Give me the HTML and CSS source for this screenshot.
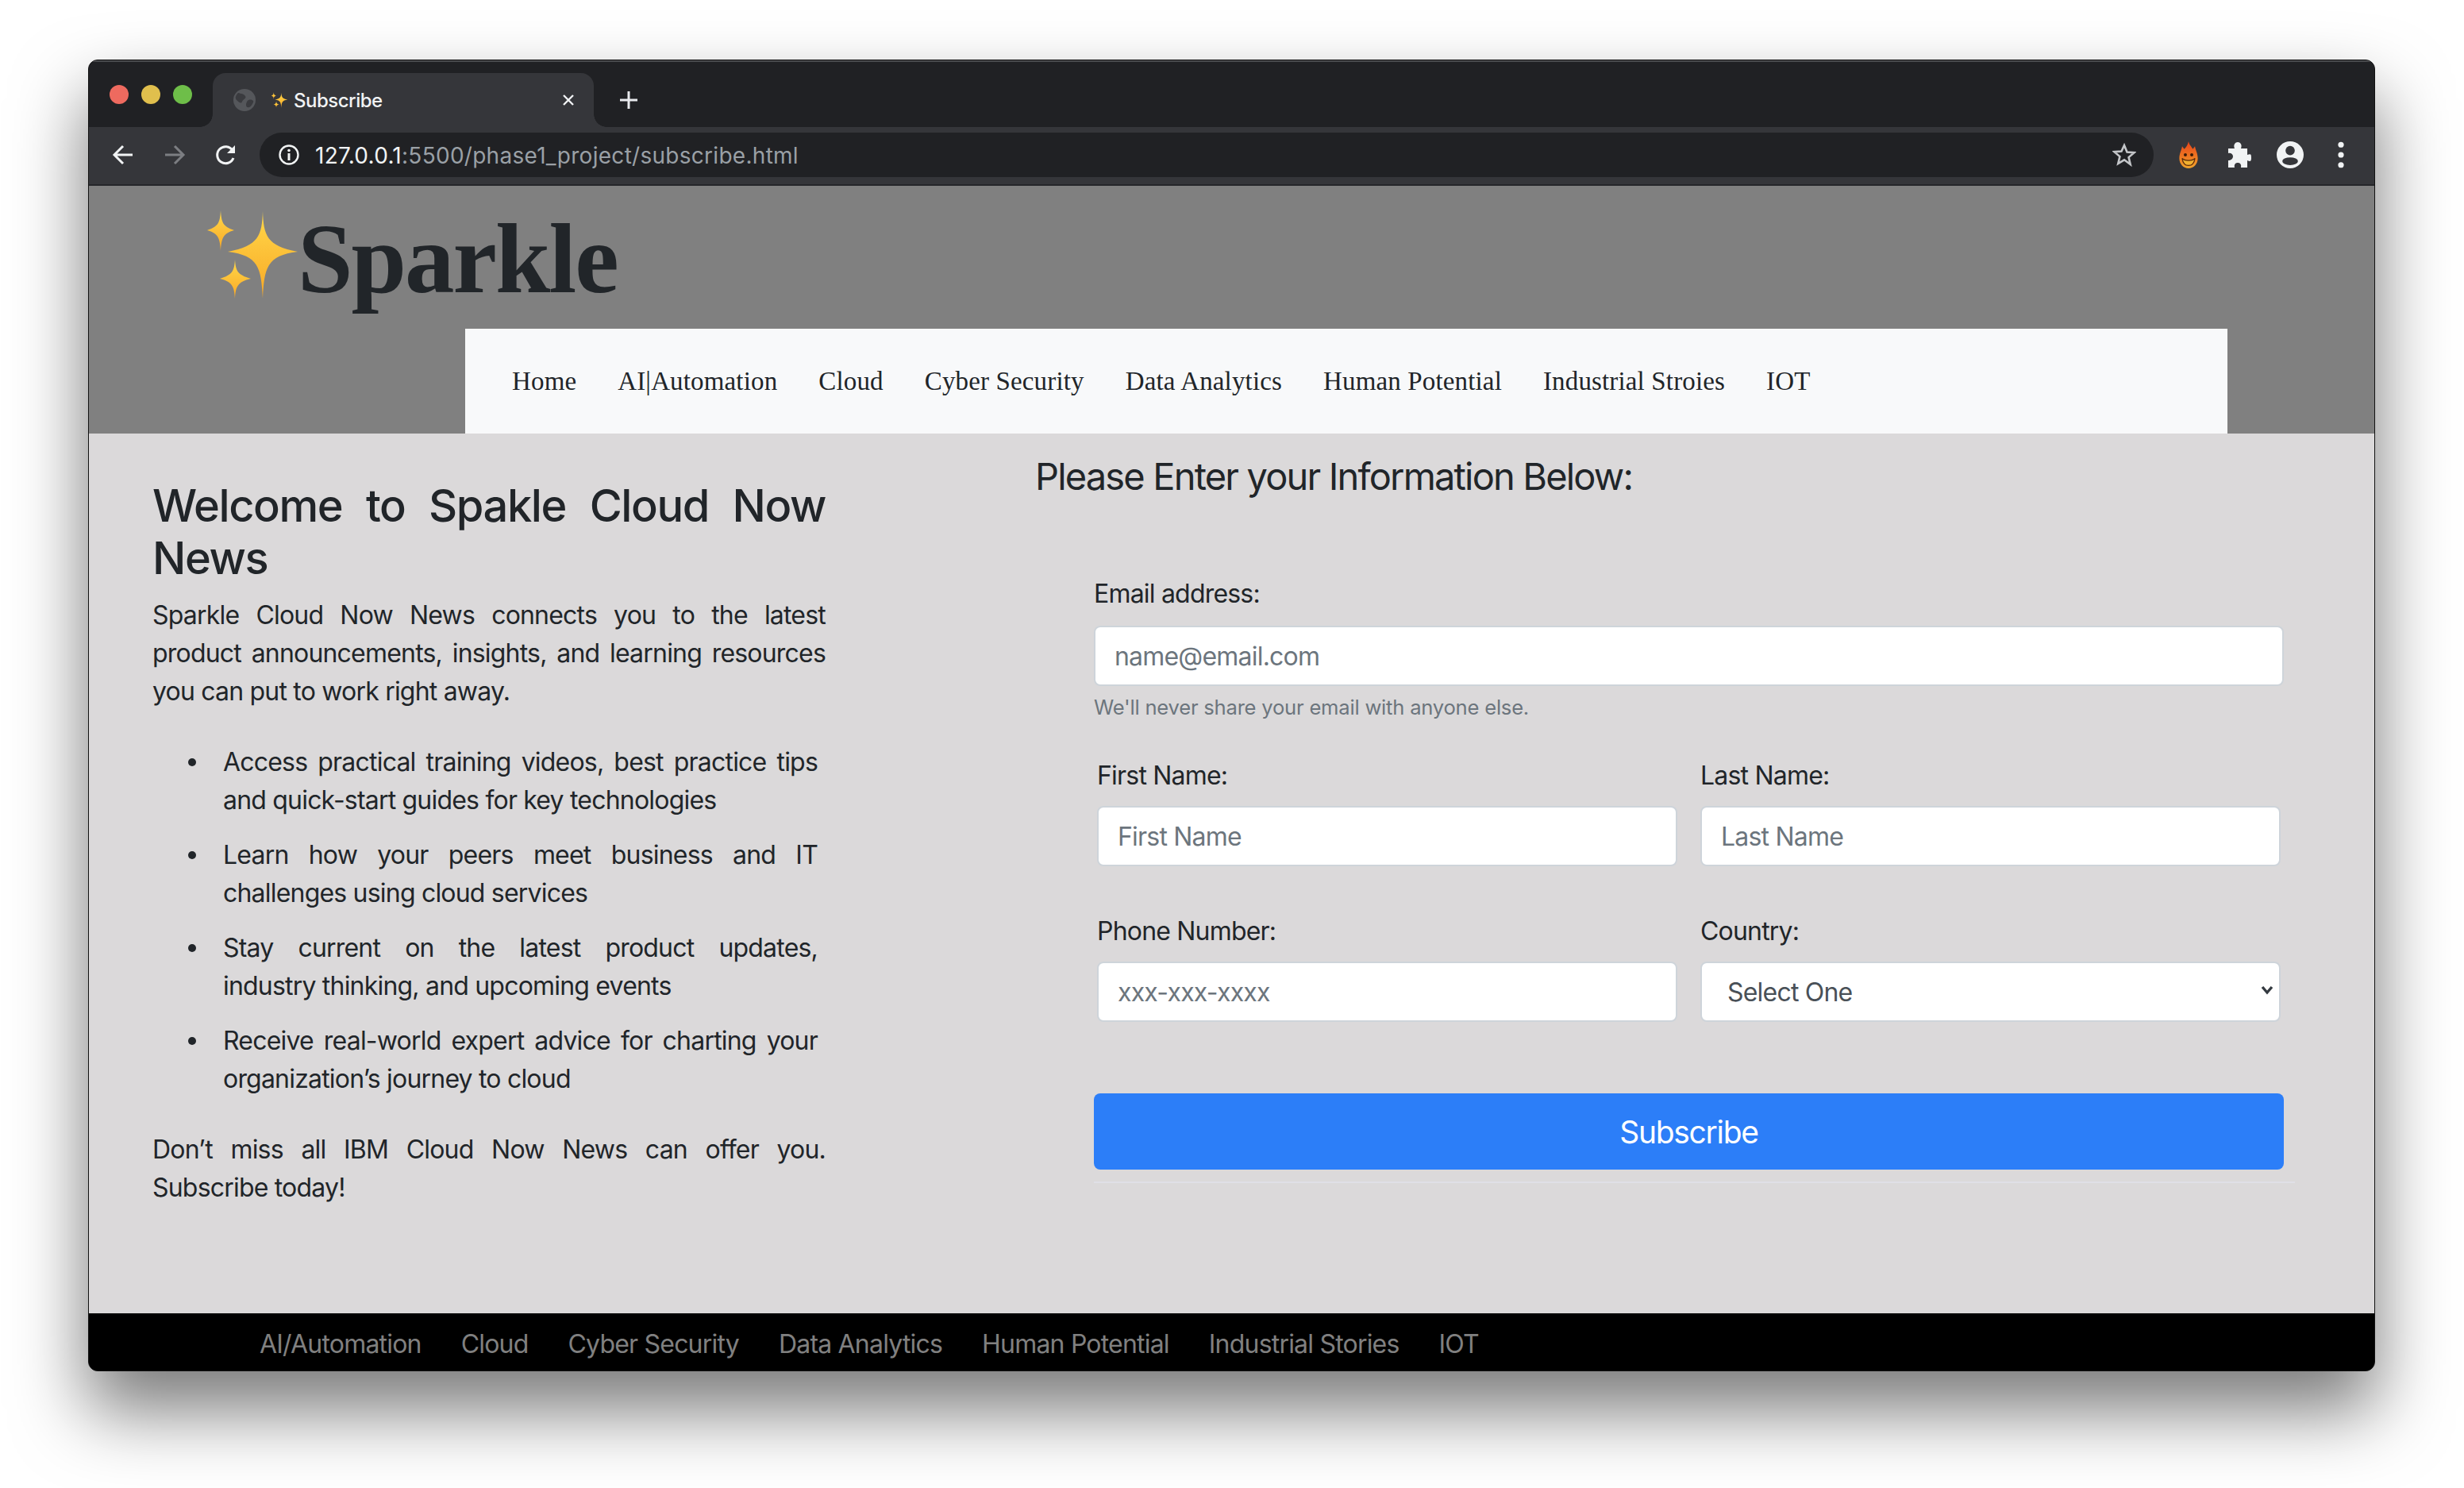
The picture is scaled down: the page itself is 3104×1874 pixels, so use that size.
FILE: index.html
```html
<!DOCTYPE html>
<html lang="en">
<head>
    <meta charset="UTF-8">
    <title>Subscribe</title>
    <link rel="stylesheet" href="styles.css">
</head>
<body>
    <div class="window">
        <div class="titlebar">
            <div class="lights">
                <span class="light light-red"></span>
                <span class="light light-yellow"></span>
                <span class="light light-green"></span>
            </div>
            <div class="tab">
                <svg class="tab-globe" viewBox="0 0 28 28"><circle cx="14" cy="14" r="14" fill="#55575b"/><path d="M6 5c4 1 7 1 9 4s-3 4-4 7-4 1-7-2 0-7 2-9zM19 14c3-1 5 0 6 1s-2 7-5 8-4-1-4-3 1-5 3-6z" fill="#3a3b3f"/></svg>
                <svg class="tab-spark" viewBox="0 0 122 116"><use href="#sparkles"/></svg>
                <span class="tab-title">Subscribe</span>
                <svg class="tab-close" viewBox="0 0 16 16"><path d="M2 2l12 12M14 2L2 14" stroke="#f1f3f4" stroke-width="2.4" fill="none"/></svg>
            </div>
            <svg class="new-tab" viewBox="0 0 24 24"><path d="M12 1v22M1 12h22" stroke="#e8eaed" stroke-width="3" fill="none"/></svg>
        </div>
        <div class="toolbar">
            <svg class="tool-icon" viewBox="0 0 28 28"><path d="M26 14H4M14 3L3 14l11 11" stroke="#f1f3f4" stroke-width="3" fill="none"/></svg>
            <svg class="tool-icon" viewBox="0 0 28 28"><path d="M2 14h22M14 3l11 11-11 11" stroke="#7c7e82" stroke-width="3" fill="none"/></svg>
            <svg class="tool-icon" viewBox="0 0 28 28"><path d="M23 18a10.500 10.500 0 1 1-1-9.500" stroke="#f1f3f4" stroke-width="3" fill="none"/><path d="M25 2v10H15z" fill="#f1f3f4"/></svg>
            <div class="omnibox">
                <svg class="info-icon" viewBox="0 0 26 26"><circle cx="13" cy="13" r="11.500" stroke="#f1f3f4" stroke-width="2.400" fill="none"/><path d="M13 11v9" stroke="#f1f3f4" stroke-width="3"/><circle cx="13" cy="7.500" r="1.800" fill="#f1f3f4"/></svg>
                <span class="url"><span class="url-host">127.0.0.1</span>:5500/phase1_project/subscribe.html</span>
                <svg class="star-icon" viewBox="0 0 30 30"><path d="M15 3l3.500 8.500 9 .7-6.900 5.900 2.100 8.900L15 21.300l-7.700 4.700 2.100-8.900-6.900-5.900 9-.7z" stroke="#c4c6c9" stroke-width="2.600" fill="none"/></svg>
            </div>
            <div class="extensions">
                <svg class="ext-icon" viewBox="0 0 28 38">
                    <defs>
                        <linearGradient id="flame" x1="0" y1="0" x2="0" y2="1">
                            <stop offset="0" stop-color="#e8431a"/>
                            <stop offset="0.6" stop-color="#ee7a22"/>
                            <stop offset="1" stop-color="#f0a52c"/>
                        </linearGradient>
                    </defs>
                    <path d="M14 0c1 5 4 7 6 11l3-4c1 6 4 10 4 17 0 8-6 14-13 14S1 32 1 24c0-7 3-11 4-17l3 4c3-3 5-6 6-11z" fill="url(#flame)"/>
                    <circle cx="9.500" cy="19" r="2.200" fill="#3a1c08"/><circle cx="18.500" cy="19" r="2.200" fill="#3a1c08"/>
                    <path d="M5 24c3 4 15 4 18 0-1 7-5 10-9 10s-8-3-9-10z" fill="#f0b030" stroke="#5a2a0a" stroke-width="1.400"/>
                </svg>
                <svg class="ext-icon" viewBox="0 0 30 34"><path d="M1 9h8c-2-5 1-8 4-8s6 3 4 8h8v8c5-2 5 0 5 4s-1 5-5 3v9h-8c1-5-2-6-4-6s-5 1-4 6H1v-9c3 0 6-2 6-5s-3-5-6-4z" fill="#f1f3f4"/></svg>
                <svg class="ext-icon" viewBox="0 0 38 38"><circle cx="19" cy="19" r="19" fill="#f1f3f4"/><circle cx="19" cy="13" r="6.500" fill="#35363a"/><ellipse cx="19" cy="28" rx="11" ry="5.500" fill="#35363a"/></svg>
                <svg class="ext-icon" viewBox="0 0 8 32"><circle cx="4" cy="4" r="3.400" fill="#f1f3f4"/><circle cx="4" cy="16" r="3.400" fill="#f1f3f4"/><circle cx="4" cy="28" r="3.400" fill="#f1f3f4"/></svg>
            </div>
        </div>

        <header class="site-header">
            <div class="logo">
                <svg class="logo-spark" viewBox="0 0 122 116">
                    <defs>
                        <linearGradient id="gold" x1="0" y1="0" x2="0" y2="1">
                            <stop offset="0" stop-color="#ffd84a"/>
                            <stop offset="1" stop-color="#f9a825"/>
                        </linearGradient>
                    </defs>
                    <g id="sparkles">
                        <path d="M74 4c1 30 5 44 44 51-39 5-42 20-44 59-2-39-5-54-44-59 39-7 43-21 44-51z" fill="url(#gold)"/>
                        <path d="M21 3c1 16 3 20 17 25-14 4-16 10-17 26-1-16-3-22-17-26 14-5 16-9 17-25z" fill="url(#gold)"/>
                        <path d="M39 65c1 14 3 19 20 24-17 4-19 10-20 25-1-15-3-21-19-25 16-5 18-10 19-24z" fill="url(#gold)"/>
                    </g>
                </svg>
                <span class="logo-text">Sparkle</span>
            </div>
            <nav class="site-nav">
                <a href="#">Home</a>
                <a href="#">AI|Automation</a>
                <a href="#">Cloud</a>
                <a href="#">Cyber Security</a>
                <a href="#">Data Analytics</a>
                <a href="#">Human Potential</a>
                <a href="#">Industrial Stroies</a>
                <a href="#">IOT</a>
            </nav>
        </header>

        <main class="content">
            <section class="intro">
                <h3>Welcome to Spakle Cloud Now News</h3>
                <p>Sparkle Cloud Now News connects you to the latest product announcements, insights, and learning resources you can put to work right away.</p>
                <ul>
                    <li>Access practical training videos, best practice tips and quick-start guides for key technologies</li>
                    <li>Learn how your peers meet business and IT challenges using cloud services</li>
                    <li>Stay current on the latest product updates, industry&nbsp;thinking, and upcoming events</li>
                    <li>Receive real-world expert advice for charting your organization’s journey to cloud</li>
                </ul>
                <p>Don’t miss all IBM Cloud Now News can offer you. Subscribe today!</p>
            </section>
            <section class="signup">
                <h4>Please Enter your Information Below:</h4>
                <form class="signup-form">
                    <div class="field field-email">
                        <label for="email">Email address:</label>
                        <input id="email" type="email" placeholder="name@email.com">
                        <small>We'll never share your email with anyone else.</small>
                    </div>
                    <div class="form-row">
                        <div class="field">
                            <label for="first">First Name:</label>
                            <input id="first" type="text" placeholder="First Name">
                        </div>
                        <div class="field">
                            <label for="last">Last Name:</label>
                            <input id="last" type="text" placeholder="Last Name">
                        </div>
                        <div class="field">
                            <label for="phone">Phone Number:</label>
                            <input id="phone" type="text" placeholder="xxx-xxx-xxxx">
                        </div>
                        <div class="field">
                            <label for="country">Country:</label>
                            <div class="select-wrap">
                                <select id="country">
                                    <option>Select One</option>
                                </select>
                                <svg class="select-arrow" viewBox="0 0 16 12"><path d="M2 2l6 7 6-7" stroke="#343a40" stroke-width="3.400" fill="none"/></svg>
                            </div>
                        </div>
                    </div>
                    <button type="submit">Subscribe</button>
                    <hr>
                </form>
            </section>
        </main>

        <footer class="site-footer">
            <a href="#">AI/Automation</a>
            <a href="#">Cloud</a>
            <a href="#">Cyber Security</a>
            <a href="#">Data Analytics</a>
            <a href="#">Human Potential</a>
            <a href="#">Industrial Stories</a>
            <a href="#">IOT</a>
        </footer>
    </div>
</body>
</html>
```

FILE: styles.css
```css
* {
    box-sizing: border-box;
}
html, body {
    height: 100%;
}
body {
    margin: 0;
    padding: 75px 112px 147px 111px;
    background-color: #fff;
    font-family: Inter, "Liberation Sans", sans-serif;
    color: #212529;
    overflow: hidden;
}
.window {
    height: 1652px;
    display: flex;
    flex-direction: column;
    border: 1px solid #111;
    border-radius: 12px;
    overflow: hidden;
    background-color: #202124;
    box-shadow: 0 48px 90px 2px rgba(0, 0, 0, 0.52);
}

/* browser chrome */
.titlebar {
    height: 84px;
    flex: none;
    display: flex;
    align-items: flex-end;
    padding-left: 26px;
    background-color: #202124;
    border-top: 2px solid #4a4b4e;
}
.lights {
    display: flex;
    gap: 16px;
    align-self: flex-start;
    margin-top: 29px;
    width: 130px;
}
.light {
    width: 24px;
    height: 24px;
    border-radius: 50%;
}
.light-red { background-color: #ee6a5f; }
.light-yellow { background-color: #e0bf4d; }
.light-green { background-color: #6ebe49; }
.tab {
    position: relative;
    width: 480px;
    height: 68px;
    display: flex;
    align-items: center;
    padding: 0 24px 0 26px;
    background-color: #35363a;
    border-radius: 16px 16px 0 0;
}
.tab::before,
.tab::after {
    content: "";
    position: absolute;
    bottom: 0;
    width: 16px;
    height: 16px;
}
.tab::before {
    left: -16px;
    background: radial-gradient(circle at 0 0, #202124 15.500px, #35363a 16px);
}
.tab::after {
    right: -16px;
    background: radial-gradient(circle at 100% 0, #202124 15.500px, #35363a 16px);
}
.tab-globe {
    width: 28px;
    height: 28px;
}
.tab-spark {
    width: 22px;
    height: 22px;
    margin-left: 19px;
}
.tab-title {
    margin-left: 7px;
    flex: 1;
    font-size: 24px;
    font-weight: 500;
    letter-spacing: -0.5px;
    color: #f1f3f4;
}
.tab-close {
    width: 16px;
    height: 16px;
}
.new-tab {
    width: 24px;
    height: 24px;
    margin: 0 0 22px 32px;
}
.toolbar {
    height: 74px;
    flex: none;
    display: flex;
    align-items: center;
    padding: 0 0 2px 0;
    background-color: #35363a;
    border-bottom: 2px solid #25262a;
}
.tool-icon {
    width: 28px;
    height: 28px;
    margin-left: 30px;
    margin-right: 7px;
}
.tool-icon:first-child {
    margin-left: 29px;
}
.omnibox {
    width: 2386px;
    height: 56px;
    margin-left: 21px;
    display: flex;
    align-items: center;
    padding: 0 22px 0 24px;
    border-radius: 28px;
    background-color: #202124;
}
.info-icon {
    width: 26px;
    height: 26px;
}
.url {
    flex: 1;
    margin-left: 20px;
    padding-top: 2px;
    font-size: 28px;
    letter-spacing: 0.28px;
    color: #9aa0a6;
}
.url-host {
    color: #f1f3f4;
}
.star-icon {
    width: 30px;
    height: 30px;
}
.extensions {
    display: flex;
    align-items: center;
    flex: 1;
    padding-left: 12px;
}
.ext-icon {
    height: 34px;
    width: 64px;
}

/* site header */
.site-header {
    flex: none;
    height: 312px;
    background-color: #808080;
}
.logo {
    height: 180px;
    display: flex;
    padding: 28px 0 0 145px;
}
.logo-spark {
    width: 122px;
    height: 116px;
}
.logo-text {
    margin: 6px 0 0 -4px;
    font-family: "Liberation Serif", serif;
    font-size: 125px;
    font-weight: bold;
    line-height: 116px;
    letter-spacing: -2px;
    color: #212529;
}
.site-nav {
    height: 132px;
    margin-left: 474px;
    width: 2220px;
    display: flex;
    align-items: center;
    gap: 52px;
    padding-left: 59px;
    background-color: #f8f9fa;
}
.site-nav a {
    font-family: "Liberation Serif", serif;
    font-size: 33px;
    letter-spacing: 0.15px;
    color: #212529;
    text-decoration: none;
}

/* page body */
.content {
    flex: 1;
    display: flex;
    background-color: #dbd9da;
    font-size: 32px;
    line-height: 48px;
    letter-spacing: -0.8px;
}
.intro {
    width: 848px;
    margin: 58px 0 0 80px;
    text-align: justify;
}
.intro h3 {
    margin: 0 0 15px;
    font-size: 56px;
    font-weight: 500;
    line-height: 66px;
    letter-spacing: -1.4px;
}
.intro p {
    margin: 0;
}
.intro ul {
    margin: 41px 10px 41px 0;
    padding-left: 89px;
    list-style: none;
}
.intro li {
    position: relative;
    margin-bottom: 21px;
}
.intro li::before {
    content: "";
    position: absolute;
    left: -44px;
    top: 19px;
    width: 10px;
    height: 10px;
    border-radius: 50%;
    background-color: #212529;
}
.intro li:last-child {
    margin-bottom: 0;
}
.signup {
    margin-left: 264px;
    width: 1590px;
}
.signup h4 {
    margin: 26px 0 0;
    font-size: 47px;
    font-weight: 400;
    line-height: 56px;
    letter-spacing: -1.83px;
}
.signup-form {
    width: 1513px;
    margin: 96px 0 0 74px;
}
.field {
    display: flex;
    flex-direction: column;
}
.field label {
    height: 48px;
    margin-bottom: 14px;
}
.field-email {
    width: 1499px;
}
.field-email label {
    margin-bottom: 16px;
}
.field-email small {
    margin-top: 8px;
    font-size: 25.600px;
    line-height: 38px;
    letter-spacing: -0.22px;
    color: #6c757d;
}
.field input,
.field select {
    width: 100%;
    height: 76px;
    padding: 0 24px;
    border: 2px solid #ced4da;
    border-radius: 8px;
    background-color: #fff;
    font-family: Inter, "Liberation Sans", sans-serif;
    font-size: 32px;
    letter-spacing: -0.8px;
    color: #495057;
}
.field select {
    appearance: none;
    padding-left: 32px;
}
.field input::placeholder {
    color: #6c757d;
    opacity: 1;
}
.form-row {
    display: grid;
    grid-template-columns: 731px 731px;
    column-gap: 29px;
    row-gap: 58px;
    margin: 43px 0 0 4px;
}
.select-wrap {
    position: relative;
}
.select-arrow {
    position: absolute;
    right: 9px;
    top: 30px;
    width: 16px;
    height: 12px;
}
.signup-form button {
    display: block;
    width: 1499px;
    height: 96px;
    margin-top: 90px;
    border: none;
    border-radius: 8px;
    background-color: #2c7ef8;
    font-family: Inter, "Liberation Sans", sans-serif;
    font-size: 39px;
    letter-spacing: -1.3px;
    color: #fff;
}
.signup-form hr {
    margin: 15px 0 0;
    border: none;
    border-top: 2px solid #e0e0e6;
}

/* footer links */
.site-footer {
    flex: none;
    height: 72px;
    display: flex;
    align-items: center;
    gap: 50px;
    padding: 4px 0 0 215px;
    background-color: #000;
}
.site-footer a {
    font-size: 32px;
    letter-spacing: -0.8px;
    color: #808080;
    text-decoration: none;
}
```
